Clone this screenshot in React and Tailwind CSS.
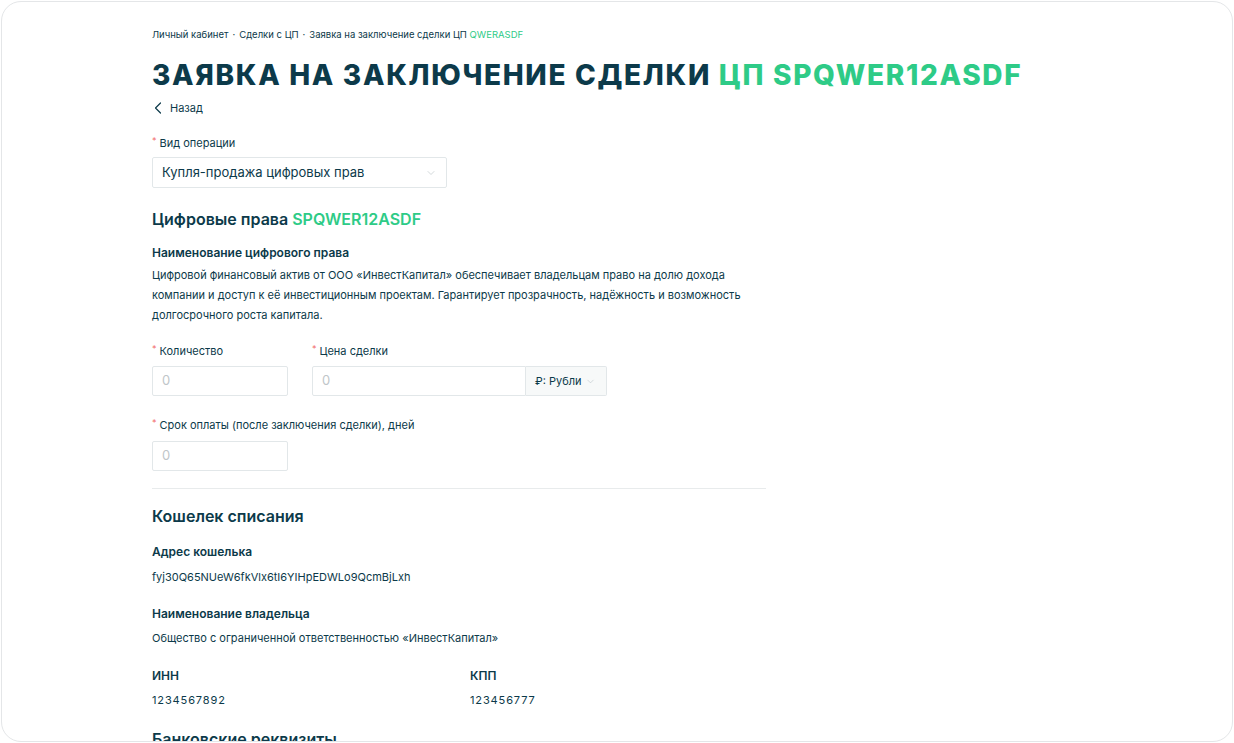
import { ChevronDown } from 'lucide-react'

const ink = 'text-[#0c3a4a]'

const Req = () => <span className="text-[#f26b6b] text-[9px] mr-[3px] relative -top-[2px]">*</span>

const Label = ({ children, className = '' }) => (
  <div className={`h-4 flex items-center text-[11px] ${ink} ${className}`}>
    <Req />
    {children}
  </div>
)

const Field = ({ className = '' }) => (
  <div className={`h-[30px] border border-[#e2e7e9] rounded-[2px] flex items-center px-[9px] text-[13px] text-[#c0c6c9] ${className}`}>
    0
  </div>
)

export default function App() {
  return (
    <div className="bg-white p-px font-['Inter',sans-serif]">
      <div className={`h-[741px] rounded-[20px] border border-[#e4e6e8] overflow-hidden pl-[150px] pt-[26px] ${ink}`}>
        {/* breadcrumbs */}
        <div className="h-[14px] flex items-center text-[9.5px] gap-[4px]">
          <span>Личный кабинет</span>
          <span>·</span>
          <span>Сделки с ЦП</span>
          <span>·</span>
          <span>
            Заявка на заключение сделки ЦП <span className="text-[#2ecb87]">QWERASDF</span>
          </span>
        </div>

        <h1 className="mt-[15px] h-9 flex items-center text-[28px] font-extrabold uppercase tracking-[0.06em] leading-none">
          Заявка на заключение сделки&nbsp;<span className="text-[#2ecb87]">ЦП SPQWER12ASDF</span>
        </h1>

        {/* back link */}
        <div className="mt-[7px] h-4 flex items-center text-[11px] gap-[8px]">
          <svg width="8" height="12" viewBox="0 0 8 12" fill="none" className="ml-[2px]">
            <polyline points="6.5,1 1.5,6 6.5,11" stroke="currentColor" strokeWidth="1.2" strokeLinecap="round" strokeLinejoin="round" />
          </svg>
          Назад
        </div>

        <Label className="mt-[19px]">Вид операции</Label>
        <div className="mt-[6px] w-[295px] h-[31px] border border-[#e2e7e9] rounded-[2px] flex items-center justify-between pl-[9px] pr-[9px] text-[13px]">
          <span>Купля-продажа цифровых прав</span>
          <ChevronDown size={12} strokeWidth={1.25} className="text-[#b9c2c6]" />
        </div>

        <div className="mt-[20px] h-[22px] flex items-center text-[16px] font-semibold">
          Цифровые права&nbsp;<span className="text-[#2ecb87]">SPQWER12ASDF</span>
        </div>

        <div className="mt-[15px] h-4 flex items-center text-[12px] font-semibold">Наименование цифрового права</div>
        <p className="mt-[4px] text-[11px] leading-[20px] w-[614px]">
          Цифровой финансовый актив от ООО «ИнвестКапитал» обеспечивает владельцам право на долю дохода
          <br />
          компании и доступ к её инвестиционным проектам. Гарантирует прозрачность, надёжность и возможность
          <br />
          долгосрочного роста капитала.
        </p>

        <div className="mt-[18px] flex gap-6">
          <div className="w-[136px]">
            <Label>Количество</Label>
            <Field className="mt-[7px] w-[136px]" />
          </div>
          <div>
            <Label>Цена сделки</Label>
            <div className="mt-[7px] flex">
              <Field className="w-[214px] rounded-r-none" />
              <div className="w-[81px] h-[30px] border border-l-0 border-[#e2e7e9] bg-[#f7f9f9] rounded-r-[2px] flex items-center justify-between pl-[9px] pr-[10px] text-[11px]">
                <span>₽: Рубли</span>
                <ChevronDown size={11} strokeWidth={1.25} className="text-[#b9c2c6]" />
              </div>
            </div>
          </div>
        </div>

        <Label className="mt-[21px]">Срок оплаты (после заключения сделки), дней</Label>
        <Field className="mt-2 w-[136px]" />

        <div className="mt-[17px] w-[614px] h-px bg-[#e8ebec]" />

        <div className="mt-[16px] h-[22px] flex items-center text-[16px] font-semibold">Кошелек списания</div>

        <div className="mt-[17px] h-4 flex items-center text-[12px] font-semibold">Адрес кошелька</div>
        <div className="mt-[9px] h-4 flex items-center text-[11px]">fyj30Q65NUeW6fkVlx6tI6YIHpEDWLo9QcmBjLxh</div>

        <div className="mt-[21px] h-4 flex items-center text-[12px] font-semibold">Наименование владельца</div>
        <div className="mt-[8px] h-4 flex items-center text-[11px]">Общество с ограниченной ответственностью «ИнвестКапитал»</div>

        <div className="mt-[22px] grid grid-cols-[318px_300px]">
          <div>
            <div className="h-4 flex items-center text-[12px] font-semibold">ИНН</div>
            <div className="mt-[8px] h-4 flex items-center text-[11px] tracking-[0.08em]">1234567892</div>
          </div>
          <div>
            <div className="h-4 flex items-center text-[12px] font-semibold">КПП</div>
            <div className="mt-[8px] h-4 flex items-center text-[11px] tracking-[0.08em]">123456777</div>
          </div>
        </div>

        <div className="mt-[20px] h-[22px] flex items-center text-[16px] font-semibold">Банковские реквизиты</div>
      </div>
    </div>
  )
}
